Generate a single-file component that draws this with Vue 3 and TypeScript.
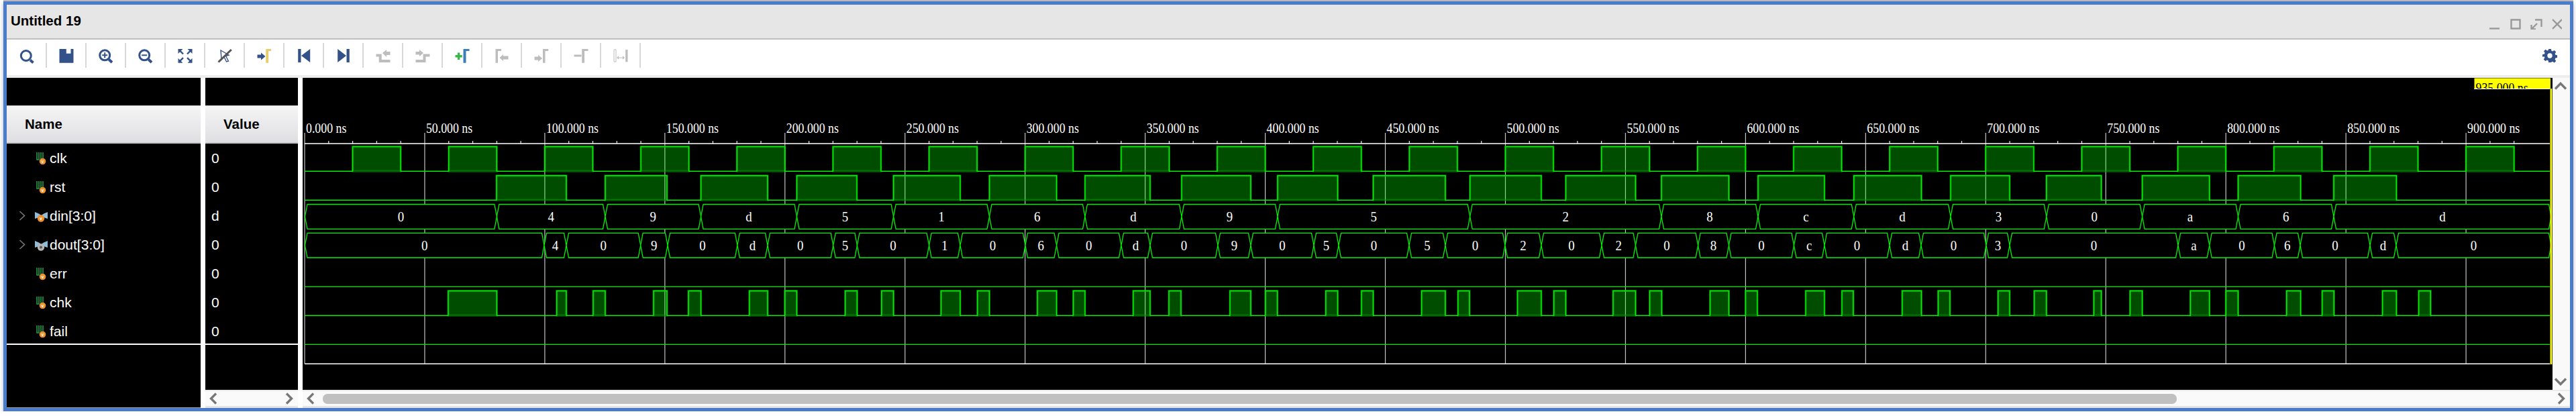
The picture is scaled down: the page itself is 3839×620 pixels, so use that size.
<script setup lang="ts">
interface Shape { d: string; fill?: string; stroke?: string; w?: number }

const NAVY = '#34528a'
const GRAY = '#bdbdbd'
const xAt = (ns: number) => 454 + ns * 3.579

const nav = (d: string): Shape => ({ d, fill: NAVY })
const off = (d: string): Shape => ({ d, fill: GRAY })
const line = (d: string, stroke = NAVY, w = 3): Shape => ({ d, fill: 'none', stroke, w })
const ring = (cx: number, cy: number, r: number) =>
  `M${cx - r} ${cy}a${r} ${r} 0 1 0 ${2 * r} 0a${r} ${r} 0 1 0 ${-2 * r} 0Z`

const tools: Shape[][] = [
  [line(ring(10.8, 12, 7.5)), line('M17 18.5L21.5 22.5', NAVY, 4)],
  [nav('M1.5 2H11.8V8.7H18.5V2H22.5V22.7H1.5Z')],
  [line(ring(10.2, 11.3, 7.5)), line('M6.2 11.3H14.2M10.2 7.3V15.3', NAVY, 2), line('M16.2 17.5L21 22', NAVY, 4)],
  [line(ring(10.2, 11.3, 7.5)), line('M6.2 11.3H14.2', NAVY, 2), line('M16.2 17.5L21 22', NAVY, 4)],
  [
    nav('M1.5 2H8.5L1.5 9ZM22.5 2H15.5L22.5 9ZM1.5 22.7H8.5L1.5 15.7ZM22.5 22.7H15.5L22.5 15.7Z'),
    line('M4 4.5L9 9.5M20 4.5L15 9.5M4 20.2L9 15.2M20 20.2L15 15.2', NAVY, 2.4),
  ],
  [
    { d: 'M6 4L18 11L13.5 12.5L17.5 20L14.5 21L11 14L7 17Z', fill: '#fff', stroke: NAVY, w: 1.4 },
    line('M2.5 21.5L21.8 3', '#555', 3),
  ],
  [nav('M1.5 10.5H7V7.5L13.5 13L7 18.5V15.5H1.5Z'), { d: 'M14.2 2H22V5H18.2V22.7H14.2Z', fill: '#e8cd6e' }],
  [nav('M3.2 2H7.5V22H3.2ZM8 12L21.2 2V22Z')],
  [nav('M16.5 2H20.8V22H16.5ZM3.2 2L16 12L3.2 22Z')],
  [line('M1.5 11.5H7.7V20H22.5', GRAY, 4), off('M11 8L17 3V6H22.5V11H17V14Z')],
  [line('M1.5 20H14.5V11.5H22.5', GRAY, 4), off('M1.5 6H7V3L13 8L7 13V10.5H1.5Z')],
  [line('M1.5 12.7H11.8M6.6 7.5V18', '#3cb54a', 3.5), { d: 'M13.5 2H22.5V5H17.5V22.7H13.5Z', fill: '#3a7fb6' }],
  [off('M2.5 2H11V5H6V22.7H2.5Z'), off('M8.5 15L14 10V12.5H21.5V17.5H14V20Z')],
  [off('M1.5 13.5H7V11L13.2 16L7 21V18.5H1.5Z'), off('M14 2H22.2V5H17.5V22.7H14Z')],
  [line('M1.5 12H12.5', GRAY, 3), off('M13.2 2H22.5V5H17V22.7H13.2Z')],
  [
    { d: 'M2 3H5V21H2Z', fill: '#fff', stroke: GRAY, w: 1 },
    off('M19.2 3H22.5V21.3H19.2Z'),
    line('M7 15H17M9 13L7 15L9 17M15 13L17 15L15 17', GRAY, 1.2),
  ],
]

type Kind = 'bit' | 'busIn' | 'busOut'
const signals: { name: string; value: string; kind: Kind; expand?: boolean }[] = [
  { name: 'clk', value: '0', kind: 'bit' },
  { name: 'rst', value: '0', kind: 'bit' },
  { name: 'din[3:0]', value: 'd', kind: 'busIn', expand: true },
  { name: 'dout[3:0]', value: '0', kind: 'busOut', expand: true },
  { name: 'err', value: '0', kind: 'bit' },
  { name: 'chk', value: '0', kind: 'bit' },
  { name: 'fail', value: '0', kind: 'bit' },
]

const END = 3800

// major ticks every 50 ns, minor every 10 ns
const majors = Array.from({ length: 19 }, (_, i) => ({
  x: xAt(i * 50),
  label: `${i * 50}.000 ns`,
}))
const minors = Array.from({ length: 93 }, (_, i) => xAt(i * 10)).filter((_, i) => i % 5 !== 0)

const clkPulses: number[][] = Array.from({ length: 23 }, (_, k) => [xAt(20 + 40 * k), xAt(40 + 40 * k)])
const rstPulses = [
  [740, 844], [902, 994], [1044.6, 1144], [1187.5, 1277], [1331.6, 1431], [1474.5, 1574.6],
  [1617, 1714], [1761, 1864], [1904, 1993.6], [2046.5, 2154], [2190.7, 2297], [2333.5, 2437.5],
  [2476, 2576.5], [2620, 2719], [2762.8, 2863.5], [2907, 2995], [3049.8, 3131.6], [3192.6, 3292.7],
  [3335.5, 3428.6], [3478, 3571.4],
]
const chkPulses = [
  [668, 740.4], [829.7, 844], [884, 902], [974, 994], [1026, 1044.6], [1116.7, 1144], [1169.6, 1187.5],
  [1259.6, 1277.4], [1313.8, 1331.6], [1402.4, 1431], [1456.6, 1474.5], [1546, 1574.6], [1599.5, 1617],
  [1688.8, 1714], [1742, 1760], [1833, 1864], [1885.8, 1903.7], [1975.8, 1993.6], [2029, 2046.5],
  [2118.6, 2154], [2172.8, 2190], [2261.5, 2297], [2315.7, 2333.5], [2404, 2437.5], [2458.5, 2476.4],
  [2548.5, 2576.5], [2601.4, 2619], [2691, 2719], [2745, 2762], [2834.8, 2863.5], [2888.4, 2906],
  [2977.7, 2995], [3031.6, 3049.8], [3120.4, 3131.6], [3174.4, 3192.6], [3264.3, 3292.7], [3317.3, 3335.5],
  [3407.7, 3428.6], [3460.7, 3478.3], [3550.6, 3571.4], [3604.6, 3622.3],
]

function digital(pulses: number[][], top: number, bottom: number) {
  let trace = `M454 ${bottom}`
  const fill = pulses.map(([a, b]) => {
    trace += `H${a}V${top}H${b}V${bottom}`
    return `M${a} ${bottom}V${top}H${b}V${bottom}Z`
  }).join('')
  return { trace: trace + `H${END}`, fill }
}

const digitals = [
  digital(clkPulses, 218.5, 255.3),
  digital(rstPulses, 261.7, 298.3),
  digital(chkPulses, 433.5, 470.3),
]

function bus(edges: number[], values: string, top: number, bottom: number, baseline: number) {
  const mid = (top + bottom) / 2
  return values.split('').map((v, i) => {
    const a = edges[i]
    const b = edges[i + 1]
    return {
      key: `${top}-${i}`,
      label: v,
      points: `${a},${mid} ${a + 3.5},${top} ${b - 3.5},${top} ${b},${mid} ${b - 3.5},${bottom} ${a + 3.5},${bottom}`,
      at: `translate(${(a + b) / 2} ${baseline}) scale(.86 1)`,
    }
  })
}

const busses = [
  ...bus(
    [454.5, 740.4, 902, 1044.6, 1187.5, 1331.6, 1474.5, 1617, 1761, 1904, 2190.7, 2476, 2620, 2762.8, 2907, 3049.8, 3192.6, 3335.5, 3478, 3802],
    '049d516d9528cd30a6d', 304.5, 341.3, 329.5,
  ),
  ...bus(
    [454.5, 811, 844, 954.7, 995, 1098.9, 1144, 1241.7, 1277.4, 1384.6, 1431, 1528, 1574.6, 1671, 1714, 1815, 1864, 1958, 1995, 2100, 2154, 2243, 2297, 2387, 2437.5, 2530.6, 2576.5, 2673.5, 2719, 2816, 2863, 2960, 2995, 3246, 3292.7, 3389.5, 3428, 3532, 3571, 3802],
    '04090d0501060d0905050202080c0d030a060d0', 347.4, 384, 372.5,
  ),
]
</script>

<template>
  <div class="window">
    <header class="titlebar">
      <span class="title">Untitled 19</span>
      <svg class="winctl" width="108" height="16" viewBox="0 0 108 16" fill="none" stroke="#999" stroke-width="2.4">
        <path d="M0 14.5H15" />
        <path d="M32.5 1.5H45.5V14.5H32.5Z" />
        <path d="M68 1.5H77.5V12M62.5 15.5L71 7M62.5 9V15.5H69" />
        <path d="M94 1L108 15M108 1L94 15" />
      </svg>
    </header>

    <nav class="toolbar">
      <button v-for="(shapes, i) in tools" :key="i" class="tool">
        <svg width="24" height="24" viewBox="0 0 24 24">
          <path
            v-for="(s, j) in shapes"
            :key="j"
            :d="s.d"
            :fill="s.fill"
            :stroke="s.stroke"
            :stroke-width="s.w"
          />
        </svg>
      </button>
      <svg class="gear" width="22" height="22" viewBox="0 0 24 24">
        <path
          fill="#34528a"
          fill-rule="evenodd"
          d="M10 1h4l.6 3.2 2 .8L19.3 3.2l2.8 2.8-1.8 2.7.8 2 3.2.6v4l-3.2.6-.8 2 1.8 2.7-2.8 2.8-2.7-1.8-2 .8L14 23h-4l-.6-3.2-2-.8-2.7 1.8-2.8-2.8 1.8-2.7-.8-2L0 14v-4l3.2-.6.8-2L2.2 4.7 5 1.9l2.7 1.8 2-.8ZM12 8a4 4 0 1 0 0 8a4 4 0 1 0 0-8Z"
        />
      </svg>
    </nav>

    <main class="main">
      <section class="names">
        <div class="head">Name</div>
        <div class="rows">
          <div v-for="s in signals" :key="s.name" class="row">
            <svg v-if="s.expand" class="expand" width="10" height="15" viewBox="0 0 10 15" fill="none" stroke="#777" stroke-width="1.6">
              <path d="M1.5 1L8.5 7.5L1.5 14" />
            </svg>
            <span v-else class="expand" />
            <svg class="medal" width="20" height="20" viewBox="0 0 20 20">
              <template v-if="s.kind === 'bit'">
                <path d="M3 1V12H6V1M9 1V12H12V1" fill="none" stroke="#1f9a45" stroke-width="1.6" />
                <circle cx="11.5" cy="14.5" r="4.8" fill="#f0902a" />
                <text x="11.5" y="17" class="medal-v">v</text>
              </template>
              <template v-else>
                <path d="M0 4L6 6.5L9.5 9L13 6.5L19 4V14L13 12H6L0 14Z" fill="#8fbcd8" />
                <template v-if="s.kind === 'busIn'">
                  <circle cx="9" cy="13.5" r="5.2" fill="#f0902a" />
                  <text x="9" y="16" class="medal-v">v</text>
                </template>
                <template v-else>
                  <circle cx="9" cy="13.5" r="5.2" fill="#b5b5b5" />
                  <circle cx="9" cy="13.5" r="2" fill="#555" />
                </template>
              </template>
            </svg>
            <span>{{ s.name }}</span>
          </div>
        </div>
      </section>

      <section class="values">
        <div class="values-body">
          <div class="head">Value</div>
          <div class="rows">
            <div v-for="s in signals" :key="s.name" class="row value">{{ s.value }}</div>
          </div>
        </div>
        <div class="hbar hbar-short">
          <svg class="chev" width="14" height="18" viewBox="0 0 14 18"><path d="M11 1.5L3.5 9L11 16.5" /></svg>
          <svg class="chev" width="14" height="18" viewBox="0 0 14 18"><path d="M3 1.5L10.5 9L3 16.5" /></svg>
        </div>
      </section>

      <section class="waves">
        <div class="waves-body">
          <svg class="canvas" width="3353" height="465" viewBox="451 116 3353 465">
            <path
              v-for="m in majors"
              :key="m.x"
              :d="`M${m.x} 198V542`"
              stroke="#c4c4c4"
              stroke-width="1.2"
            />
            <path v-for="x in minors" :key="x" :d="`M${x} 210V214`" stroke="#eee" stroke-width="1.2" />
            <path d="M454 214H3800M454 542.3H3800" stroke="#fff" stroke-width="1.6" />
            <g
              v-for="m in majors"
              :key="m.label"
              :transform="`translate(${m.x + 2} 198) scale(.81 1)`"
            >
              <text class="wave-text">{{ m.label }}</text>
            </g>

            <g v-for="(d, i) in digitals" :key="i">
              <path :d="d.fill" fill="#00ff00" fill-opacity=".3" stroke="#00a000" stroke-width="3" stroke-opacity=".55" />
              <path :d="d.trace" fill="none" stroke="#00f000" stroke-width="1.5" />
            </g>
            <path d="M454 427.3H3800M454 513.3H3800" stroke="#00e800" stroke-width="1.3" />

            <g v-for="b in busses" :key="b.key">
              <polygon :points="b.points" fill="#000" stroke="#00f000" stroke-width="1.3" />
              <g :transform="b.at"><text class="wave-text" text-anchor="middle">{{ b.label }}</text></g>
            </g>

            <rect x="3687.5" y="116.5" width="113.5" height="16" fill="#ffff00" />
            <g transform="translate(3689.5 138) scale(.81 1)"><text class="wave-text cursor-text">935.000 ns</text></g>
            <rect x="3687" y="132" width="114" height="14" fill="#000" />
            <path d="M3687 132.5H3800" stroke="#fff" stroke-width="1" />
            <rect x="3800.5" y="132" width="2.8" height="411" fill="#ffff00" />
          </svg>
          <div class="vbar">
            <svg class="chev" width="20" height="14" viewBox="0 0 20 14"><path d="M2 11.5L10 3.5L18 11.5" /></svg>
            <svg class="chev" width="20" height="14" viewBox="0 0 20 14"><path d="M2 2.5L10 10.5L18 2.5" /></svg>
          </div>
        </div>
        <div class="hbar">
          <svg class="chev" width="14" height="18" viewBox="0 0 14 18"><path d="M11 1.5L3.5 9L11 16.5" /></svg>
          <div class="thumb" />
          <svg class="chev" width="14" height="18" viewBox="0 0 14 18"><path d="M3 1.5L10.5 9L3 16.5" /></svg>
        </div>
      </section>
    </main>
  </div>
</template>

<style>
html,
body {
  margin: 0;
  background: #fff;
}
</style>

<style scoped>
.window {
  box-sizing: border-box;
  width: 3830px;
  height: 611px;
  margin: 2px 0 0 5px;
  border: 5px solid #4a7ccb;
  box-shadow: 0 -2px 0 #b9b9b9, 0 2px 6px rgba(0, 0, 0, .3);
  font-family: "Liberation Sans", Arial, sans-serif;
  display: flex;
  flex-direction: column;
  overflow: hidden;
  background: #fff;
}

.titlebar {
  flex: none;
  box-sizing: border-box;
  height: 52px;
  background: #e6e6e6;
  border-bottom: 2px solid #bfbfbf;
  display: flex;
  align-items: center;
  justify-content: space-between;
  padding: 0 12px 0 6px;
}

.title {
  font-size: 20.5px;
  font-weight: 700;
  color: #000;
  margin-bottom: 2px;
}

.winctl {
  margin-top: 8px;
}

.toolbar {
  flex: none;
  box-sizing: border-box;
  height: 57px;
  padding: 7px 19px 13px 1px;
  border-bottom: 4px solid #ededed;
  display: flex;
  align-items: center;
}

.tool {
  box-sizing: border-box;
  width: 59px;
  height: 37px;
  padding: 0;
  background: none;
  border: 0;
  border-right: 2px solid #d8d8d8;
  display: flex;
  align-items: center;
  justify-content: center;
}

.tool svg {
  display: block;
}

.gear {
  margin-left: auto;
}

.main {
  flex: 1;
  min-height: 0;
  display: flex;
  background: #fff;
}

.names {
  flex: none;
  width: 289px;
  padding-top: 41px;
  box-sizing: border-box;
  background: #000;
  border-bottom: 1px solid #999;
}

.values {
  flex: none;
  width: 138px;
  margin-left: 7px;
  display: flex;
  flex-direction: column;
}

.values-body {
  flex: none;
  height: 465px;
  padding-top: 41px;
  box-sizing: border-box;
  background: #000;
}

.head {
  box-sizing: border-box;
  height: 57px;
  padding-left: 27px;
  display: flex;
  align-items: center;
  font-size: 20.5px;
  font-weight: 700;
  color: #000;
  background: linear-gradient(#f5f5f5, #dfdfe3);
  border-bottom: 2px solid #c6c6c6;
  border-top: 1px solid #bbb;
}

.rows {
  box-sizing: border-box;
  height: 300px;
  overflow: hidden;
  border-bottom: 2px solid #fff;
}

.row {
  height: 43px;
  display: flex;
  align-items: center;
  padding-left: 18px;
  font-size: 21px;
  color: #fff;
}

.row.value {
  padding-left: 9px;
}

.expand {
  flex: none;
  width: 10px;
  margin-right: 14px;
}

.medal {
  flex: none;
  margin-right: 2px;
}

.medal-v {
  font-size: 7px;
  font-weight: 700;
  fill: #fff;
  text-anchor: middle;
}

.waves {
  flex: 1;
  min-width: 0;
  margin-left: 7px;
  display: flex;
  flex-direction: column;
}

.waves-body {
  flex: none;
  height: 465px;
  display: flex;
}

.canvas {
  flex: none;
  display: block;
  background: #000;
}

.wave-text {
  font-family: "Liberation Serif", "Times New Roman", serif;
  font-size: 22px;
  fill: #fff;
}

.cursor-text {
  fill: #000;
}

.vbar {
  flex: 1;
  box-sizing: border-box;
  padding: 5px 3px 5px 0;
  background: #f9f9f9;
  display: flex;
  flex-direction: column;
  justify-content: space-between;
  align-items: center;
}

.hbar {
  flex: 1;
  box-sizing: border-box;
  background: #fafafa;
  border-top: 2px solid #ebebeb;
  border-bottom: 3px solid #e4e4e4;
  padding: 0 6px 0 5px;
  display: flex;
  align-items: center;
}

.hbar-short {
  justify-content: space-between;
}

.thumb {
  width: 2763px;
  height: 15px;
  margin-left: 11px;
  margin-right: auto;
  background: #c0c0c0;
  border-radius: 7px;
}

.chev {
  flex: none;
  display: block;
}

.chev path {
  fill: none;
  stroke: #777;
  stroke-width: 3.4;
}
</style>
